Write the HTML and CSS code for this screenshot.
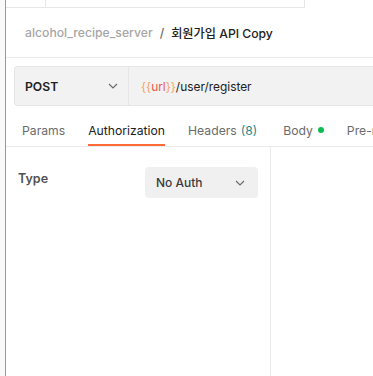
FILE: index.html
```html
<!DOCTYPE html>
<html lang="ko">
<head>
    <meta charset="UTF-8">
    <title>회원가입 API Copy</title>
    <link rel="stylesheet" href="styles.css">
</head>
<body>
    <div class="app">
        <div class="gutter"></div>
        <div class="main">
            <div class="tab_strip">
                <div class="tab_slot first"></div>
                <div class="tab_slot wide"></div>
            </div>

            <div class="breadcrumb">
                <span class="collection">alcohol_recipe_server</span>
                <span class="slash">/</span>
                <span class="request_name">회원가입 API Copy</span>
            </div>

            <div class="request_bar">
                <div class="method">
                    <span>POST</span>
                    <svg width="10" height="6" viewBox="0 0 10 6"><path d="M1 1l4 4 4-4" fill="none" stroke="#6b6b6b" stroke-width="1.2"/></svg>
                </div>
                <div class="url">
                    <span class="brace">{{</span><span class="var">url</span><span class="brace">}}</span>/user/register
                </div>
            </div>

            <div class="req_tabs">
                <span class="req_tab">Params</span>
                <span class="req_tab active">Authorization</span>
                <span class="req_tab">Headers <span class="count">(8)</span></span>
                <span class="req_tab body_tab">Body <i class="dot"></i></span>
                <span class="req_tab">Pre-request Script</span>
            </div>

            <div class="auth">
                <div class="auth_left">
                    <span class="type_label">Type</span>
                    <div class="auth_select">
                        <span>No Auth</span>
                        <svg width="10" height="6" viewBox="0 0 10 6"><path d="M1 1l4 4 4-4" fill="none" stroke="#6b6b6b" stroke-width="1.2"/></svg>
                    </div>
                </div>
                <div class="auth_right"></div>
            </div>
        </div>
    </div>
</body>
</html>
```

FILE: styles.css
```css
body {
    margin: 0;
    font-family: Inter, "Noto Sans CJK KR", sans-serif;
    background: #fff;
    overflow: hidden;
}

.app {
    display: flex;
    height: 376px;
}

.gutter {
    width: 5px;
    background: #f9f9f9;
    border-right: 1px solid #6d9cf0;
    flex-shrink: 0;
}

.main {
    flex: 1;
    display: flex;
    flex-direction: column;
    min-width: 0;
    overflow: hidden;
}

.tab_strip {
    display: flex;
    height: 8px;
    flex-shrink: 0;
}

.tab_slot {
    border-right: 1px solid #e6e6e6;
    border-bottom: 1px solid #e6e6e6;
}

.tab_slot.first {
    width: 39px;
}

.tab_slot.wide {
    width: 258px;
}

.breadcrumb {
    height: 49px;
    flex-shrink: 0;
    display: flex;
    align-items: center;
    padding-left: 19px;
    font-size: 12.2px;
    font-weight: 500;
    border-bottom: 1px solid #ebebeb;
    white-space: nowrap;
}

.collection {
    color: #a6a6a6;
}

.slash {
    color: #6b6b6b;
    margin: 0 7px;
}

.request_name {
    color: #212121;
}

.request_bar {
    display: flex;
    height: 38px;
    flex-shrink: 0;
    margin: 8px 0 0 8px;
    background: #f2f2f2;
    border: 1px solid #e6e6e6;
    border-right: none;
    border-radius: 4px 0 0 4px;
    font-size: 12.2px;
}

.method {
    width: 114px;
    flex-shrink: 0;
    display: flex;
    align-items: center;
    justify-content: space-between;
    padding: 0 10px 0 10px;
    box-sizing: border-box;
    border-right: 1px solid #e6e6e6;
    font-weight: 600;
    color: #212121;
}

.url {
    display: flex;
    align-items: center;
    padding-left: 12px;
    font-size: 11.9px;
    color: #212121;
    white-space: nowrap;
}

.brace {
    color: #f5a35e;
}

.var {
    color: #eb5a4e;
}

.req_tabs {
    display: flex;
    height: 40px;
    flex-shrink: 0;
    padding-left: 16px;
    border-bottom: 1px solid #ebebeb;
    font-size: 12.2px;
    white-space: nowrap;
}

.req_tab {
    display: flex;
    align-items: center;
    color: #6b6b6b;
    margin-right: 23px;
    border-bottom: 2px solid transparent;
    padding-top: 10px;
}

.req_tab.active {
    color: #212121;
    border-bottom-color: #ff6c37;
}

.body_tab {
    margin-left: 3px;
}

.count {
    color: #1f8a8a;
    margin-left: 4px;
}

.dot {
    width: 6px;
    height: 6px;
    border-radius: 50%;
    background: #0cbb52;
    margin-left: 5px;
}

.auth {
    flex: 1;
    display: flex;
}

.auth_left {
    width: 265px;
    flex-shrink: 0;
    border-right: 1px solid #ebebeb;
    display: flex;
    align-items: flex-start;
    justify-content: space-between;
    padding: 20px 12px 0 12px;
    box-sizing: border-box;
}

.type_label {
    font-size: 12.5px;
    font-weight: 600;
    color: #505050;
    margin-top: 4px;
}

.auth_select {
    width: 113px;
    height: 31px;
    background: #f0f0f0;
    border-radius: 4px;
    display: flex;
    align-items: center;
    justify-content: space-between;
    padding: 0 13px 0 11px;
    box-sizing: border-box;
    font-size: 12px;
    font-weight: 500;
    color: #3b3b3b;
}
```
